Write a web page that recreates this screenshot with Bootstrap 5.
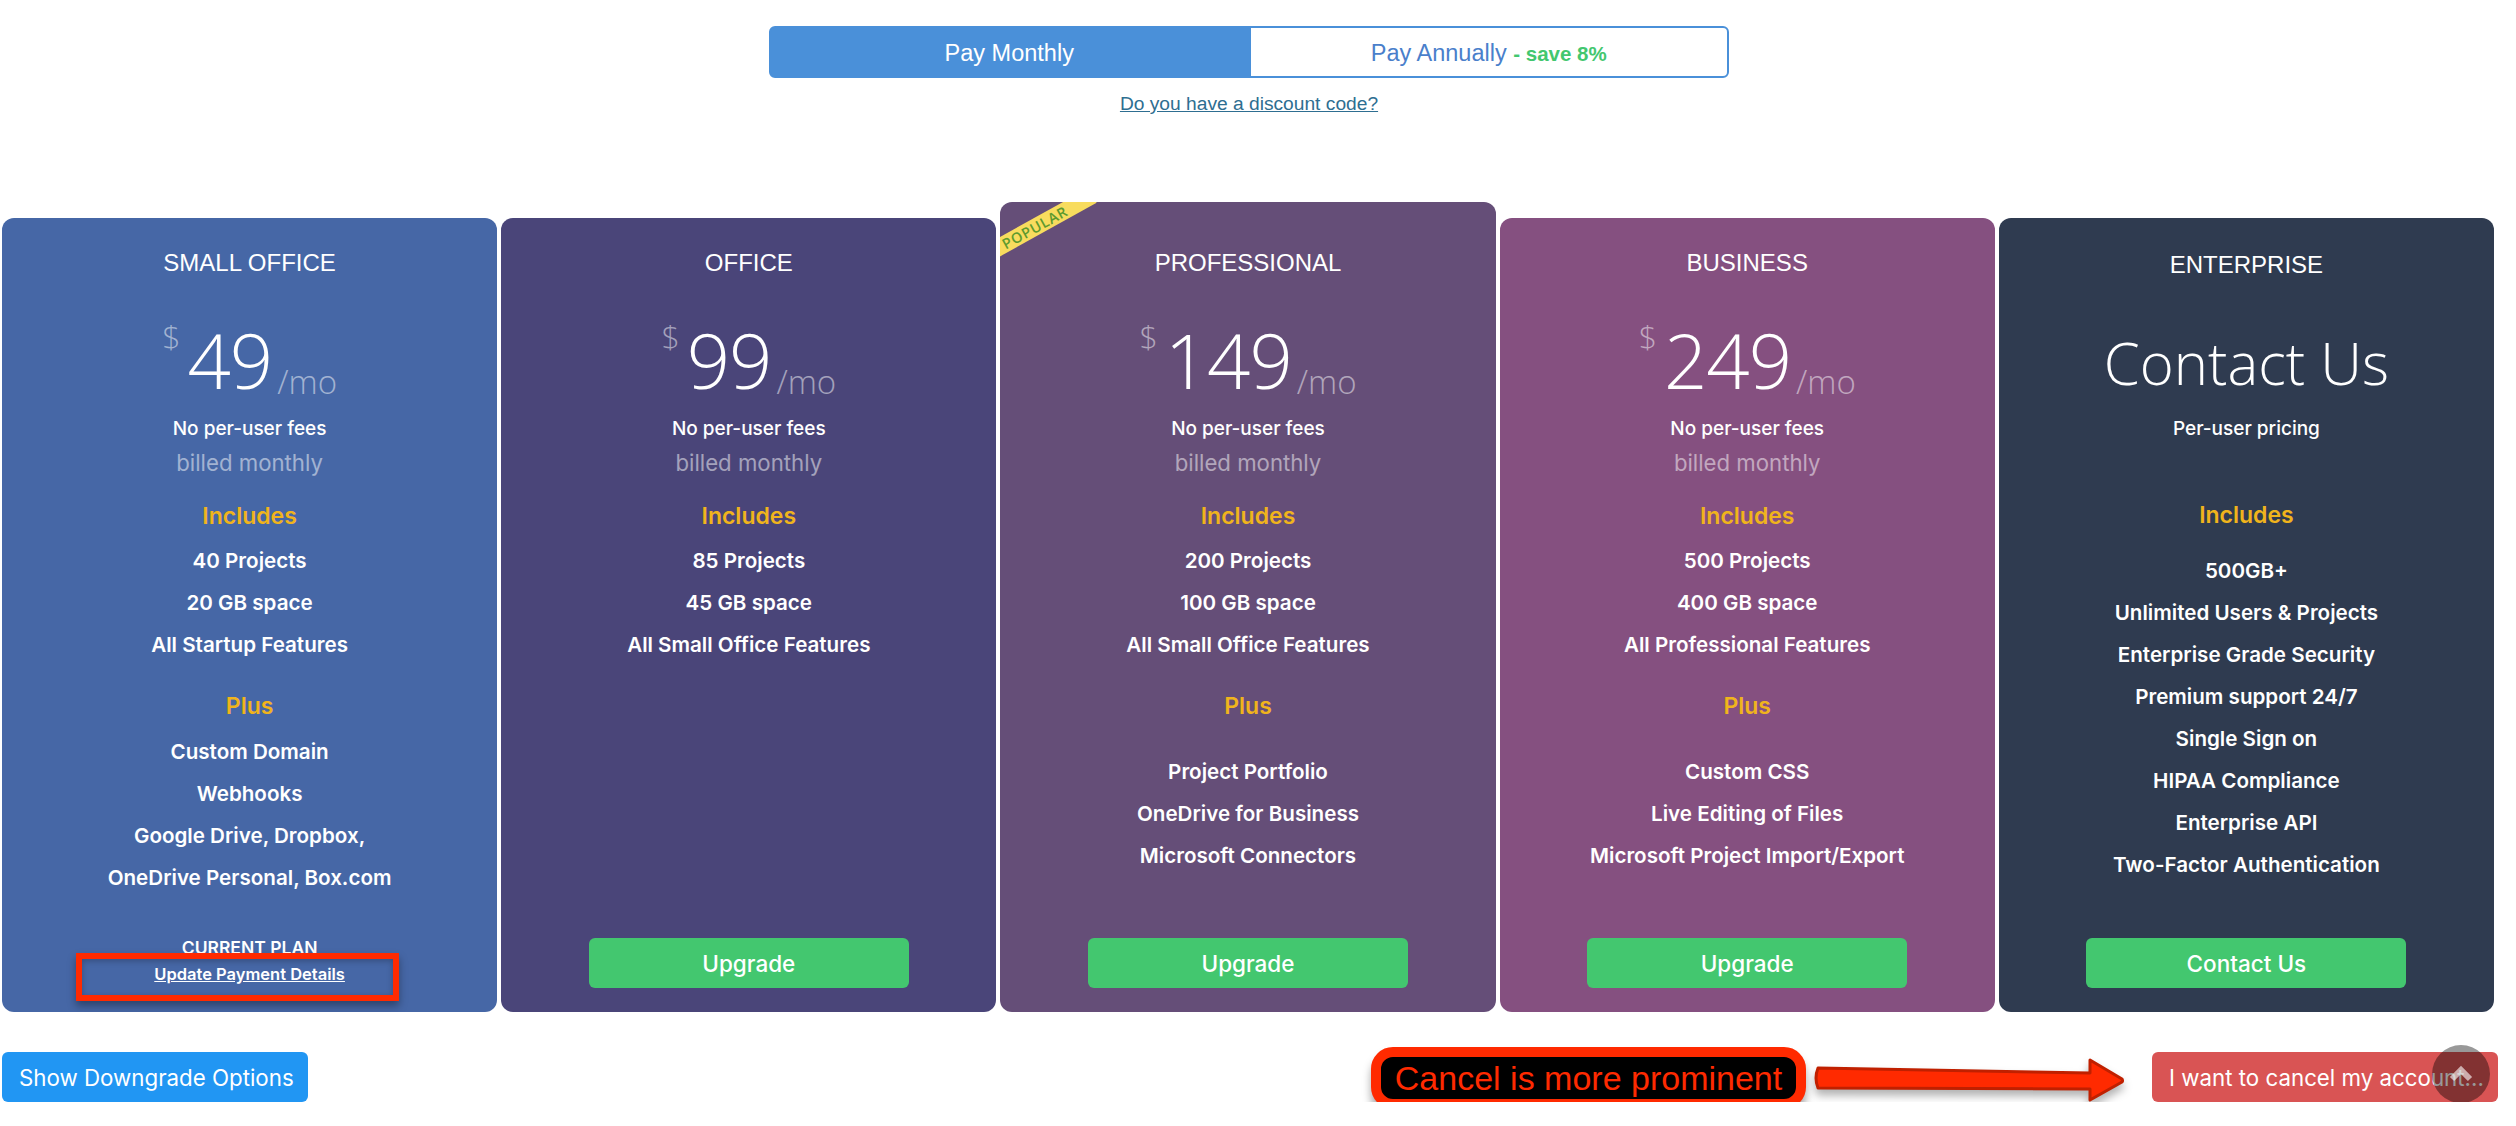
<!DOCTYPE html>
<html lang="en">
<head>
  <meta charset="utf-8">
  <title>Pricing</title>
  <link href="https://cdn.jsdelivr.net/npm/bootstrap@5.3.3/dist/css/bootstrap.min.css" rel="stylesheet">
  <style>
    body { font-family: "Liberation Sans", Arial, sans-serif; background: #fff; overflow: hidden; }
    .page-wrap { width: 2498px; }

    .pay-toggle { width: 960px; margin-top: 26px; }
    .pay-toggle .btn { width: 480px; height: 52px; font-size: 23.5px; line-height: 50px; padding: 0; border: 2px solid #4a90d9; border-radius: 6px; }
    .pay-on { background: #4a90d9; color: #fff; }
    .pay-on:hover { background: #4a90d9; color: #fff; }
    .pay-off { background: #fff; color: #4a7fcb; }
    .pay-save { color: #43c76f; font-weight: 700; font-size: 20.5px; }
    .discount-link { display: block; margin-top: 14px; font-size: 19.2px; line-height: 24px; color: #2e6e91; }

    .plan-row { width: 2492px; margin: 86px 0 0 2px; gap: 4px; }
    .plan-card { flex: 1 1 0; height: 794px; border: 0; border-radius: 12px; color: #fff; overflow: hidden; padding: 30px 0 24px; font-family: Inter, "Liberation Sans", sans-serif; }
    .plan-small { background: #4667a6; }
    .plan-office { background: #4a4579; }
    .plan-pro { background: #654e78; height: 810px; padding-top: 46px; }
    .plan-biz { background: #855080; }
    .plan-ent { background: #2f3b50; }

    .plan-title { font: 400 24px/30px "Liberation Sans", Arial, sans-serif; }
    .plan-ent .plan-title { margin-top: 2px; }
    .price-line { height: 100px; margin-top: 31.5px; line-height: 100px; font-family: "Open Sans", sans-serif; font-weight: 300; white-space: nowrap; }
    .price-num { font-size: 76px; letter-spacing: -1px; }
    .price-cur { font-size: 32px; color: rgba(255,255,255,.5); position: relative; top: -41px; margin-right: 7px; }
    .price-per { font-size: 33px; color: rgba(255,255,255,.5); position: relative; top: 5px; margin-left: 5px; }
    .contact-big { font: 300 58px/100px "Open Sans", sans-serif; margin-top: 32.5px; }
    .fee-line { font-size: 19px; font-weight: 500; line-height: 32px; margin-top: 3px; }
    .plan-ent .fee-line { margin-top: 0; }
    .billed-line { font-size: 22.2px; line-height: 32px; color: rgba(255,255,255,.5); margin-top: 2.5px; }
    .plan-head { color: #f0b41c; font-size: 23px; font-weight: 600; line-height: 42px; margin-top: 15.5px; }
    .plan-ent .plan-head { margin-top: 49px; }
    .plan-item { font-size: 20.6px; font-weight: 600; line-height: 42px; }
    .plan-head + .plan-items { margin-top: 3.5px; }
    .plan-ent .plan-head + .plan-items { margin-top: 14.5px; }
    .plan-items + .plan-head { margin-top: 19px; }
    .plan-head + .plan-gap { margin-top: 23.5px; }

    .upgrade-btn { display: block; width: 320px; height: 50px; margin: auto auto 0; padding: 0; background: #43c76f; border: 0; border-radius: 6px; color: #fff; font-size: 22.5px; line-height: 52px; font-weight: 500; }
    .upgrade-btn:hover { background: #43c76f; color: #fff; }
    .plan-current { margin-top: auto; font-size: 17.5px; font-weight: 600; line-height: 16px; }
    .plan-update { display: block; color: #fff; font-size: 16.5px; font-weight: 600; line-height: 24px; margin: 6px 0 2px; }

    .note-box { position: absolute; left: 74px; top: 735px; width: 323px; height: 48px; border: 6px solid #ff2a00; box-shadow: 0 5px 8px rgba(0,0,0,.35), inset 0 2px 6px rgba(0,0,0,.25); }
    .ribbon { position: absolute; left: -20px; top: 14px; width: 120px; height: 17px; padding-right: 12px; background: #f8dc5e; color: #5e9a2e; font: 600 14.5px/17px "Open Sans", sans-serif; letter-spacing: .8px; text-align: center; transform: rotate(-29deg); }

    .action-row { height: 50px; margin-top: 40px; }
    .action-btn { height: 50px; padding: 0 17px; border: 0; border-radius: 6px; color: #fff; font: 400 22.3px/52px Inter, "Liberation Sans", sans-serif; white-space: nowrap; }
    .btn-down { background: #2196f3; width: 306px; margin-left: 2px; }
    .btn-down:hover { background: #2196f3; color: #fff; }
    .btn-cancel { background: #d95454; width: 346px; margin-left: 27px; text-align: left; }
    .btn-cancel:hover { background: #d95454; color: #fff; }
    .note-callout { height: 62px; width: 435px; margin: 2px 0 0 auto; border: 10px solid #ff2a00; border-radius: 22px; background: #000; color: #ff2a00; font-size: 34px; line-height: 42px; text-align: center; white-space: nowrap; box-shadow: 0 8px 8px rgba(0,0,0,.35); }
    .note-arrow { width: 312px; height: 50px; margin-left: 7px; flex: none; overflow: visible; filter: drop-shadow(0 6px 4px rgba(0,0,0,.3)); }
    .to-top { position: absolute; right: 8px; top: -7px; width: 58px; height: 58px; border-radius: 50%; background: rgba(0,0,0,.4); }
  </style>
</head>
<body>

<div class="page-wrap">
  <div class="text-center">
    <div class="btn-group pay-toggle" role="group">
      <button type="button" class="btn pay-on">Pay Monthly</button>
      <button type="button" class="btn pay-off">Pay Annually <span class="pay-save">- save 8%</span></button>
    </div>
    <a href="#" class="discount-link">Do you have a discount code?</a>
  </div>

  <div class="d-flex align-items-end plan-row">

    <div class="card plan-card plan-small text-center position-relative">
      <div class="plan-title">SMALL OFFICE</div>
      <div class="price-line"><span class="price-cur">$</span><span class="price-num">49</span><span class="price-per">/mo</span></div>
      <div class="fee-line">No per-user fees</div>
      <div class="billed-line">billed monthly</div>
      <div class="plan-head">Includes</div>
      <div class="plan-items">
        <div class="plan-item">40 Projects</div>
        <div class="plan-item">20 GB space</div>
        <div class="plan-item">All Startup Features</div>
      </div>
      <div class="plan-head">Plus</div>
      <div class="plan-items">
        <div class="plan-item">Custom Domain</div>
        <div class="plan-item">Webhooks</div>
        <div class="plan-item">Google Drive, Dropbox,</div>
        <div class="plan-item">OneDrive Personal, Box.com</div>
      </div>
      <div class="plan-current">CURRENT PLAN</div>
      <a href="#" class="plan-update">Update Payment Details</a>
      <div class="note-box"></div>
    </div>

    <div class="card plan-card plan-office text-center">
      <div class="plan-title">OFFICE</div>
      <div class="price-line"><span class="price-cur">$</span><span class="price-num">99</span><span class="price-per">/mo</span></div>
      <div class="fee-line">No per-user fees</div>
      <div class="billed-line">billed monthly</div>
      <div class="plan-head">Includes</div>
      <div class="plan-items">
        <div class="plan-item">85 Projects</div>
        <div class="plan-item">45 GB space</div>
        <div class="plan-item">All Small Office Features</div>
      </div>
      <a href="#" class="btn upgrade-btn">Upgrade</a>
    </div>

    <div class="card plan-card plan-pro text-center position-relative">
      <span class="ribbon">POPULAR</span>
      <div class="plan-title">PROFESSIONAL</div>
      <div class="price-line"><span class="price-cur">$</span><span class="price-num">149</span><span class="price-per">/mo</span></div>
      <div class="fee-line">No per-user fees</div>
      <div class="billed-line">billed monthly</div>
      <div class="plan-head">Includes</div>
      <div class="plan-items">
        <div class="plan-item">200 Projects</div>
        <div class="plan-item">100 GB space</div>
        <div class="plan-item">All Small Office Features</div>
      </div>
      <div class="plan-head">Plus</div>
      <div class="plan-items plan-gap">
        <div class="plan-item">Project Portfolio</div>
        <div class="plan-item">OneDrive for Business</div>
        <div class="plan-item">Microsoft Connectors</div>
      </div>
      <a href="#" class="btn upgrade-btn">Upgrade</a>
    </div>

    <div class="card plan-card plan-biz text-center">
      <div class="plan-title">BUSINESS</div>
      <div class="price-line"><span class="price-cur">$</span><span class="price-num">249</span><span class="price-per">/mo</span></div>
      <div class="fee-line">No per-user fees</div>
      <div class="billed-line">billed monthly</div>
      <div class="plan-head">Includes</div>
      <div class="plan-items">
        <div class="plan-item">500 Projects</div>
        <div class="plan-item">400 GB space</div>
        <div class="plan-item">All Professional Features</div>
      </div>
      <div class="plan-head">Plus</div>
      <div class="plan-items plan-gap">
        <div class="plan-item">Custom CSS</div>
        <div class="plan-item">Live Editing of Files</div>
        <div class="plan-item">Microsoft Project Import/Export</div>
      </div>
      <a href="#" class="btn upgrade-btn">Upgrade</a>
    </div>

    <div class="card plan-card plan-ent text-center">
      <div class="plan-title">ENTERPRISE</div>
      <div class="contact-big">Contact Us</div>
      <div class="fee-line">Per-user pricing</div>
      <div class="plan-head">Includes</div>
      <div class="plan-items">
        <div class="plan-item">500GB+</div>
        <div class="plan-item">Unlimited Users &amp; Projects</div>
        <div class="plan-item">Enterprise Grade Security</div>
        <div class="plan-item">Premium support 24/7</div>
        <div class="plan-item">Single Sign on</div>
        <div class="plan-item">HIPAA Compliance</div>
        <div class="plan-item">Enterprise API</div>
        <div class="plan-item">Two-Factor Authentication</div>
      </div>
      <a href="#" class="btn upgrade-btn">Contact Us</a>
    </div>

  </div>

  <div class="d-flex align-items-center position-relative action-row">
    <button type="button" class="btn action-btn btn-down">Show Downgrade Options</button>
    <div class="note-callout">Cancel is more prominent</div>
    <svg class="note-arrow" viewBox="0 0 312 50">
      <path d="M5 16 L277 21 L277 8 L309 27 Q310 29 309 30 L277 48 L277 37 L5 36 Q1 26 5 16 Z" fill="#ff2a00" stroke="#c02000" stroke-width="3" stroke-linejoin="round"/>
    </svg>
    <button type="button" class="btn action-btn btn-cancel">I want to cancel my account...</button>
    <div class="to-top">
      <svg width="58" height="58" viewBox="0 0 58 58"><path d="M20 34 L29 25 L38 34" fill="none" stroke="rgba(255,255,255,.6)" stroke-width="6"/></svg>
    </div>
  </div>
</div>

<script src="https://cdn.jsdelivr.net/npm/bootstrap@5.3.3/dist/js/bootstrap.bundle.min.js"></script>
</body>
</html>
